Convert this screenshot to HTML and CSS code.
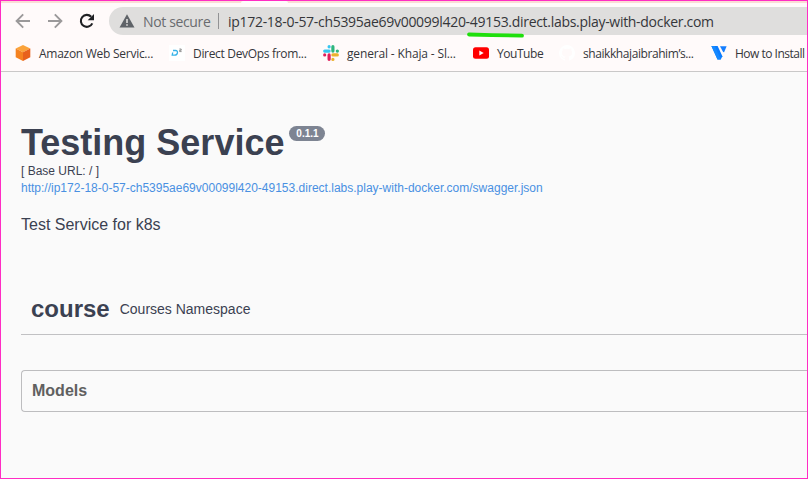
FILE: index.html
```html
<!DOCTYPE html>
<html lang="en">
<head>
<meta charset="utf-8">
<title>Testing Service</title>
<link rel="stylesheet" href="styles.css">
</head>
<body>
<div class="window">
  <div class="tabstrip"><div class="active-tab"></div></div>
  <header class="toolbar">
    <svg class="nav" width="16" height="16" viewBox="0 0 16 16"><path d="M15 8H2M8.2 1.4 1.6 8l6.600 6.600" fill="none" stroke="#9b999a" stroke-width="1.900"/></svg>
    <svg class="nav" width="16" height="16" viewBox="0 0 16 16"><path d="M1 8h13M7.800 1.400 14.400 8l-6.600 6.600" fill="none" stroke="#9b999a" stroke-width="1.900"/></svg>
    <svg class="nav" width="16" height="16" viewBox="0 0 16 16"><path d="M13.300 10.400A6 6 0 1 1 12.200 3.700" fill="none" stroke="#202124" stroke-width="2.100"/><path d="M15 1v6.300H8.700z" fill="#202124"/></svg>
    <div class="address">
      <svg class="warn" width="16" height="14" viewBox="0 0 16 14"><path d="M8 .3 15.500 13.500H.5z" fill="#5f6368"/><path d="M7.200 5h1.600v4H7.200zM7.200 10.200h1.600v1.600H7.200z" fill="#dfdedd"/></svg>
      <span class="security">Not secure</span>
      <span class="divider"></span>
      <span class="url">ip172-18-0-57-ch5395ae69v00099l420-49153.direct.labs.play-with-docker.com</span>
      <svg class="marker" width="60" height="8" viewBox="0 0 60 8"><path d="M3 3.500 26 4.200 56 4.600" fill="none" stroke="#1fdf0c" stroke-width="3.800" stroke-linecap="round"/></svg>
    </div>
  </header>
  <nav class="bookmarks">
    <a class="bookmark b1"><svg width="16" height="16" viewBox="0 0 16 16"><path d="M8 0 15.300 3.600 8 7.200.7 3.600z" fill="#fba33a"/><path d="M.7 3.600 8 7.200V16L.7 12.300z" fill="#f58220"/><path d="M15.300 3.600 8 7.200V16l7.300-3.700z" fill="#e8611c"/></svg><span>Amazon Web Servic...</span></a>
    <a class="bookmark b2"><svg width="16" height="16" viewBox="0 0 16 16"><path fill="#fff" d="M0 0h16v16H0z"/><path d="M4 5.500h2.500c3.200 0 2.200 4.700-.8 4.700H3.200l.5-2.700" fill="none" stroke="#35b2e8" stroke-width="1.300"/><path d="M10.400 4h1.800v1.300h-1.600v1.300h2" fill="none" stroke="#777" stroke-width=".8"/></svg><span>Direct DevOps from...</span></a>
    <a class="bookmark b3"><svg width="16" height="16" viewBox="0 0 16 16" fill="none" stroke-width="3.200" stroke-linecap="round"><path d="M1.700 6.100h4.400M6.100 1.700v.1" stroke="#36c5f0"/><path d="M9.900 1.700v4.400M14.300 6.100h.1" stroke="#2eb67d"/><path d="M9.900 9.900h4.400M9.900 14.300v.1" stroke="#ecb22e"/><path d="M6.100 9.900v4.400M1.700 9.900v.1" stroke="#e01e5a"/></svg><span>general - Khaja - Sl...</span></a>
    <a class="bookmark b4"><svg width="16" height="16" viewBox="0 0 16 16"><rect y="2.200" width="16" height="11.500" rx="2.500" fill="#f00"/><path d="m6.300 5.500 4.400 2.500-4.400 2.500z" fill="#fff"/></svg><span>YouTube</span></a>
    <a class="bookmark b5"><svg width="16" height="16" viewBox="0 0 16 16"><path fill="#fff" d="M8 0a8 8 0 0 0-2.500 15.600c.4.100.5-.2.500-.4v-1.500c-2.200.5-2.700-.9-2.700-.9-.4-.9-.9-1.200-.9-1.200-.7-.5.100-.5.100-.5.800.1 1.200.8 1.200.8.700 1.200 1.900.9 2.300.7.100-.5.300-.9.500-1.100-1.800-.2-3.600-.9-3.600-4 0-.9.300-1.600.8-2.100-.1-.3-.4-1 .1-2.100 0 0 .7-.2 2.200.8a8 8 0 0 1 4 0c1.500-1 2.200-.8 2.200-.8.400 1.100.2 1.800.1 2.100.5.600.8 1.300.8 2.100 0 3.100-1.900 3.800-3.700 4 .3.200.6.700.6 1.500v2.200c0 .2.100.5.500.4A8 8 0 0 0 8 0z"/></svg><span>shaikkhajaibrahim’s...</span></a>
    <a class="bookmark b6"><svg width="16" height="16" viewBox="0 0 16 16"><path d="M.4 1h6.200l4.800 10.200-1.700 3.400H6.500z" fill="#0a7cff"/><path d="M.4 1h3.400l6 13.600H6.500z" fill="#1689ff"/><path d="M9 1.300h6.600l-2.600 6.200-1.300-1.200z" fill="#147eff"/></svg><span>How to Install</span></a>
  </nav>
  <main class="page">
    <h1 class="title">Testing Service<span class="version">0.1.1</span></h1>
    <div class="base">[ Base URL: / ]</div>
    <a class="spec">http://ip172-18-0-57-ch5395ae69v00099l420-49153.direct.labs.play-with-docker.com/swagger.json</a>
    <p class="description">Test Service for k8s</p>
    <section class="tag"><h2>course</h2><span>Courses Namespace</span></section>
    <section class="models"><h3>Models</h3></section>
  </main>
</div>
</body>
</html>
```
FILE: styles.css
```css
* { box-sizing: border-box; }
body { margin: 0; }
.window {
  width: 808px; height: 479px; overflow: hidden;
  border: 1px solid #ff2cc4; background: #fafafa;
  font-family: "Liberation Sans", Arial, sans-serif; color: #3b4151;
}
.tabstrip { height: 2px; background: #fbdcd5; padding-left: 240px; }
.active-tab { width: 47px; height: 2px; background: #fffafa; border-radius: 3px 3px 0 0; }
.toolbar {
  height: 35px; padding: 4px 0 3px 14px; display: flex; align-items: center;
  background: #fffafa; font-family: "Open Sans", "Noto Sans", sans-serif;
}
.nav { flex: none; margin-right: 16px; }
.nav:nth-child(3) { margin-right: 14px; }
.address {
  position: relative; flex: 1; height: 28px; display: flex; align-items: center;
  padding-left: 10px; border-radius: 14px 0 0 14px; background: #dfdedd;
  font-size: 14px; white-space: nowrap;
}
.warn { margin-right: 8px; flex: none; }
.security { width: 67px; flex: none; color: #696b6f; letter-spacing: -.36px; }
.divider { width: 1px; height: 16px; flex: none; margin: 0 9px 0 8px; background: #929294; }
.url { color: #35363a; letter-spacing: -.297px; }
.marker { position: absolute; left: 357px; top: 24px; }
.bookmarks {
  position: relative; height: 34px; display: flex; align-items: center; padding: 0 0 3px 14px;
  background: #fffafa; border-bottom: 1px solid #c9c8c8;
  font-family: "Open Sans", "Noto Sans", sans-serif; font-size: 12px; color: #35363a;
}
.bookmark { display: flex; align-items: center; gap: 8px; flex: none; white-space: nowrap; }
.bookmark svg { flex: none; }
.b1 { width: 154px; letter-spacing: -.27px; }
.b2 { width: 154px; letter-spacing: -.32px; }
.b3 { width: 150px; letter-spacing: -.15px; }
.b4 { width: 86px; letter-spacing: -.45px; }
.b5 { width: 152px; letter-spacing: -.42px; }
.b6 { width: 96px; letter-spacing: -.5px; }
.page { padding: 47px 0 0 20px; }
.title { margin: 0; height: 44px; display: flex; align-items: flex-start; font-size: 36px; line-height: 48px; white-space: nowrap; }
.version {
  margin: 7px 0 0 5px; width: 36px; height: 15px; border-radius: 8px; text-align: center;
  background: #7d8492; color: #fff; font-size: 10px; line-height: 15px;
}
.base { height: 17px; font-size: 12px; line-height: 17px; }
.spec { display: block; height: 17px; font-size: 12px; line-height: 17px; color: #4990e2; white-space: nowrap; }
.description { margin: 18px 0 0; height: 20px; font-size: 16px; line-height: 20px; }
.tag { margin-top: 49px; height: 51px; padding: 0 0 1px 10px; display: flex; align-items: center; border-bottom: 1px solid #c1c1c3; }
.tag h2 { margin: 0 10px 0 0; font-size: 24px; line-height: 28px; }
.tag span { font-size: 14px; line-height: 18px; }
.models { margin-top: 35px; height: 42px; padding-left: 10px; display: flex; align-items: center; border: 1px solid #bdbdbf; border-right: 0; border-radius: 4px 0 0 4px; }
.models h3 { margin: 0; font-size: 16px; line-height: 18px; color: #606060; }
```
